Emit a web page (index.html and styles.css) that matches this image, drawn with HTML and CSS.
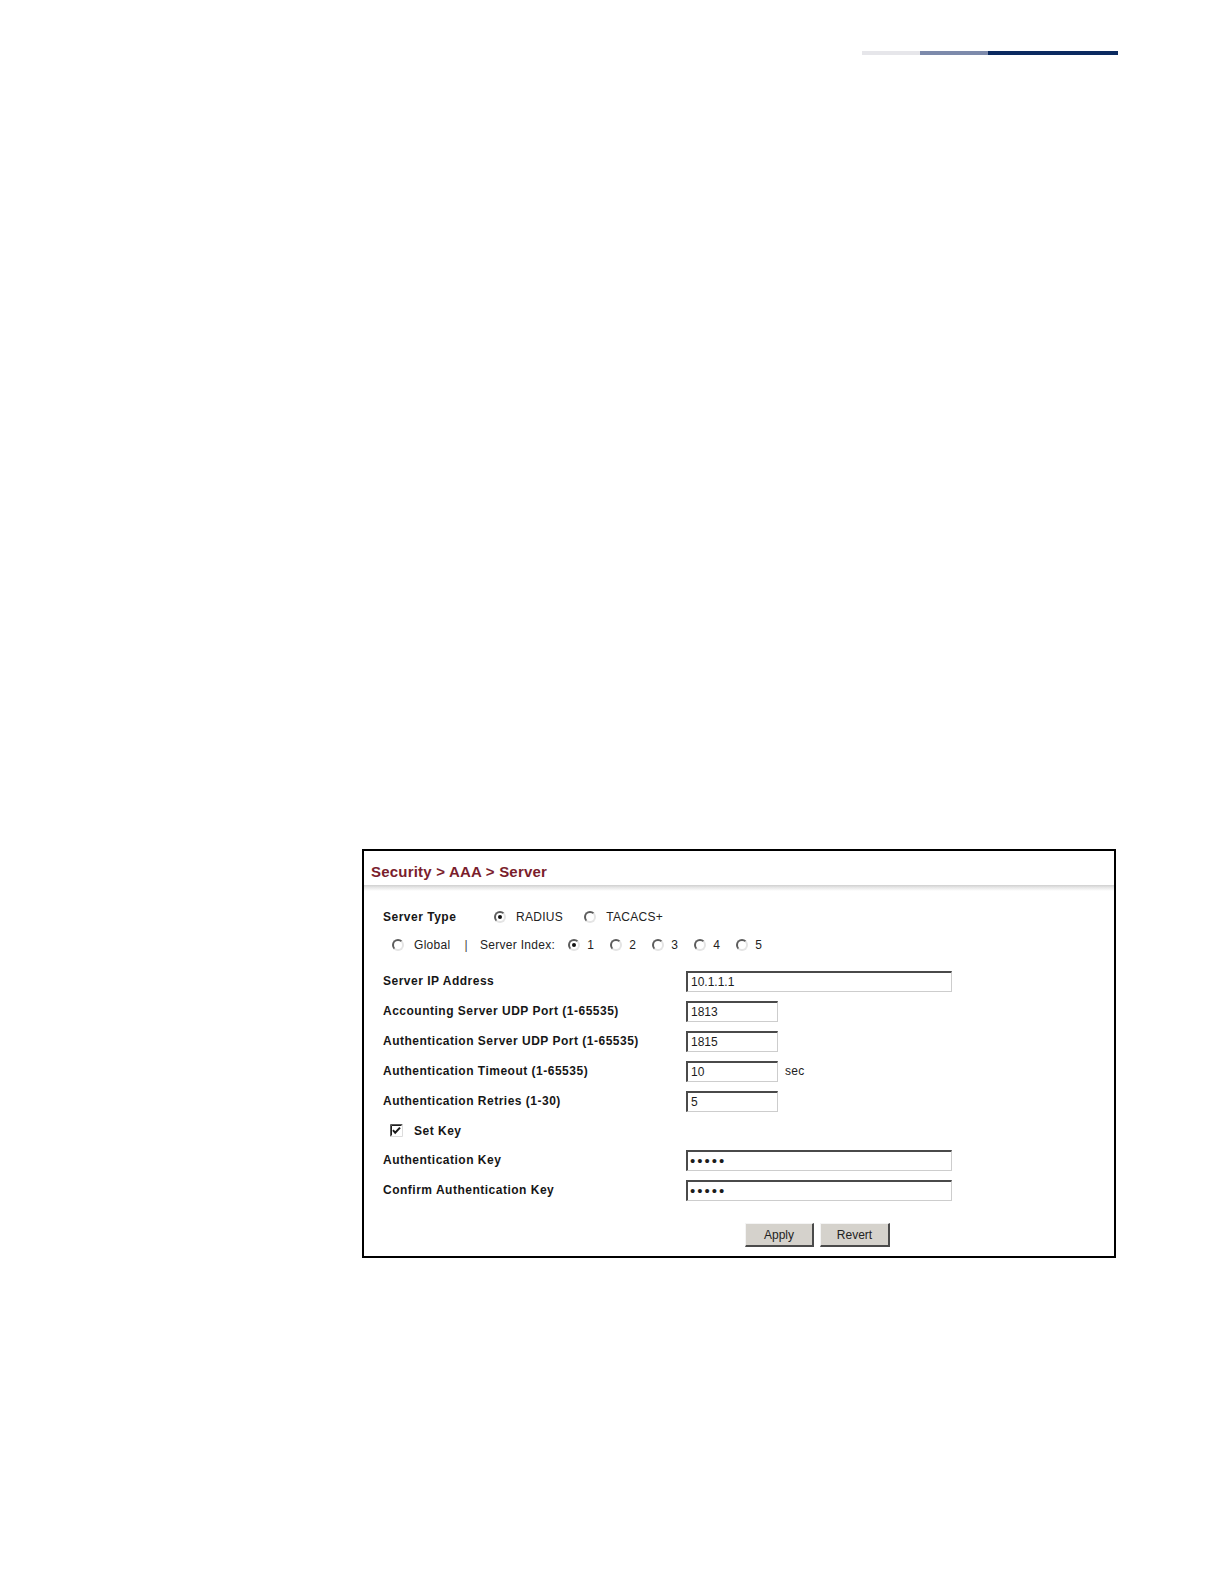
FILE: index.html
```html
<!DOCTYPE html>
<html lang="en">
<head>
<meta charset="utf-8">
<title>Security &gt; AAA &gt; Server</title>
<link rel="stylesheet" href="styles.css">
</head>
<body>
<div class="page">
  <div class="topbar">
    <div class="seg seg-light"></div>
    <div class="seg seg-mid"></div>
    <div class="seg seg-dark"></div>
  </div>

  <div class="panel">
    <div class="panel-head">
      <div class="title">Security &gt; AAA &gt; Server</div>
    </div>
    <div class="sep"></div>

    <div class="form">
      <div class="type-row">
        <div class="lbl type-lbl">Server Type</div>
        <span class="radio checked"></span><span class="opt opt-radius">RADIUS</span>
        <span class="radio"></span><span class="opt">TACACS+</span>
      </div>

      <div class="index-row">
        <span class="radio"></span><span class="opt opt-global">Global</span>
        <span class="opt bar">|</span>
        <span class="opt opt-index">Server Index:</span>
        <span class="radio idx checked"></span><span class="opt num">1</span>
        <span class="radio idx"></span><span class="opt num">2</span>
        <span class="radio idx"></span><span class="opt num">3</span>
        <span class="radio idx"></span><span class="opt num">4</span>
        <span class="radio idx"></span><span class="opt num">5</span>
      </div>

      <div class="fields">
        <div class="lbl">Server IP Address</div>
        <div class="val"><input class="box wide" type="text" value="10.1.1.1"></div>

        <div class="lbl">Accounting Server UDP Port (1-65535)</div>
        <div class="val"><input class="box narrow" type="text" value="1813"></div>

        <div class="lbl">Authentication Server UDP Port (1-65535)</div>
        <div class="val"><input class="box narrow" type="text" value="1815"></div>

        <div class="lbl">Authentication Timeout (1-65535)</div>
        <div class="val"><input class="box narrow" type="text" value="10"><span class="unit">sec</span></div>

        <div class="lbl">Authentication Retries (1-30)</div>
        <div class="val"><input class="box narrow" type="text" value="5"></div>

        <div class="setkey">
          <svg class="check" width="13" height="13" viewBox="0 0 13 13" aria-hidden="true">
            <rect x="0" y="0" width="13" height="13" fill="#ffffff"/>
            <path d="M0.5 12.5 V0.5 H12.5" fill="none" stroke="#5a5a5a" stroke-width="1"/>
            <path d="M1.5 11.5 V1.5 H11.5" fill="none" stroke="#1e1e1e" stroke-width="1"/>
            <path d="M12.5 0.5 V12.5 H0.5" fill="none" stroke="#dcdcdc" stroke-width="1"/>
            <path d="M3 6.2 L5.2 8.8 L10 3.6" fill="none" stroke="#1a1a1a" stroke-width="2"/>
          </svg>
          <span class="lbl setkey-lbl">Set Key</span>
        </div>
        <div class="val"></div>

        <div class="lbl">Authentication Key</div>
        <div class="val"><input class="box wide pw" type="password" value="abcde"></div>

        <div class="lbl">Confirm Authentication Key</div>
        <div class="val"><input class="box wide pw" type="password" value="abcde"></div>
      </div>

      <div class="actions">
        <button class="btn btn-apply" type="button">Apply</button>
        <button class="btn btn-revert" type="button">Revert</button>
      </div>
    </div>
  </div>
</div>
</body>
</html>
```

FILE: styles.css
```css
html, body {
  margin: 0;
  padding: 0;
  background: #ffffff;
}

.page {
  width: 1224px;
  height: 1584px;
  background: #ffffff;
  font-family: "Liberation Sans", Arial, sans-serif;
  color: #1c1c1c;
  overflow: hidden;
}

/* top decorative bar */
.topbar {
  display: flex;
  margin: 51px 0 0 862px;
  height: 4px;
}
.seg { height: 4px; }
.seg-light { width: 58px; background: #e6e6ea; }
.seg-mid { width: 68px; background: #7d8aab; }
.seg-dark { width: 130px; background: #0b2a60; }

/* panel */
.panel {
  box-sizing: border-box;
  margin: 794px 0 0 362px;
  width: 754px;
  height: 409px;
  border: 2px solid #000000;
  background: #ffffff;
}

.panel-head {
  box-sizing: border-box;
  height: 34px;
  padding: 11px 0 0 7px;
}
.title {
  font-size: 15px;
  line-height: 20px;
  font-weight: bold;
  color: #7a1d2c;
  letter-spacing: 0.2px;
}
.sep {
  height: 6px;
  background: linear-gradient(to bottom, #cfcfcf 0%, #e6e6e6 40%, #ffffff 100%);
}

.form {
  padding: 12px 0 0 19px;
}

.lbl {
  font-size: 12px;
  font-weight: bold;
  letter-spacing: 0.5px;
  color: #161616;
  white-space: nowrap;
}

.opt {
  font-size: 12px;
  letter-spacing: 0.3px;
  color: #222222;
  white-space: nowrap;
}

/* radio buttons */
.radio {
  box-sizing: border-box;
  display: inline-block;
  position: relative;
  width: 12px;
  height: 12px;
  border-radius: 50%;
  border: 2px solid;
  border-color: #5c5c5c #e4e4e4 #e4e4e4 #5c5c5c;
  background: #ffffff;
  flex: none;
}
.radio.checked::after {
  content: "";
  position: absolute;
  left: 2px;
  top: 2px;
  width: 4px;
  height: 4px;
  border-radius: 50%;
  background: #111111;
}

.type-row {
  display: flex;
  align-items: center;
  height: 28px;
}
.type-lbl { width: 111px; }
.type-row .radio { margin-right: 10px; }
.opt-radius { margin-right: 21px; }

.index-row {
  display: flex;
  align-items: center;
  height: 28px;
  padding-left: 9px;
}
.index-row .radio { margin-right: 10px; }
.index-row .radio.idx { margin-right: 7px; }
.opt-global { margin-right: 14px; }
.bar { margin-right: 12px; color: #444444; }
.opt-index { margin-right: 13px; }
.num { width: 7px; margin-right: 16px; }

/* field grid */
.fields {
  margin-top: 7px;
  display: grid;
  grid-template-columns: 303px auto;
  grid-template-rows: 30px 30px 30px 30px 30px 29px 30px 30px;
  align-items: center;
}
.val {
  display: flex;
  align-items: center;
  height: 100%;
}

.box {
  box-sizing: border-box;
  height: 21px;
  margin: 0;
  padding: 0 0 0 3px;
  border: 1px solid #cdcdcd;
  border-top: 2px solid #4a4a4a;
  border-left: 2px solid #4a4a4a;
  background: #ffffff;
  font-family: "Liberation Sans", Arial, sans-serif;
  font-size: 12px;
  color: #1c1c1c;
  outline: none;
}
.wide { width: 266px; }
.narrow { width: 92px; }
.pw {
  font-size: 15px;
  letter-spacing: 2px;
  padding-left: 2px;
}

.unit {
  margin-left: 7px;
  font-size: 12px;
  letter-spacing: 0.3px;
  color: #222222;
}

.setkey {
  display: flex;
  align-items: center;
  padding-left: 7px;
  height: 29px;
}
.check {
  display: block;
  margin-right: 11px;
  flex: none;
}

.actions {
  display: flex;
  gap: 6px;
  margin-top: 18px;
  padding-left: 362px;
}
.btn {
  box-sizing: border-box;
  height: 24px;
  margin: 0;
  padding: 0;
  background: #d5d2cc;
  border-top: 1px solid #f4f4f4;
  border-left: 1px solid #f4f4f4;
  border-right: 2px solid #4a4a4a;
  border-bottom: 2px solid #4a4a4a;
  font-family: "Liberation Sans", Arial, sans-serif;
  font-size: 12px;
  color: #222222;
}
.btn-apply { width: 69px; }
.btn-revert { width: 70px; }
```
